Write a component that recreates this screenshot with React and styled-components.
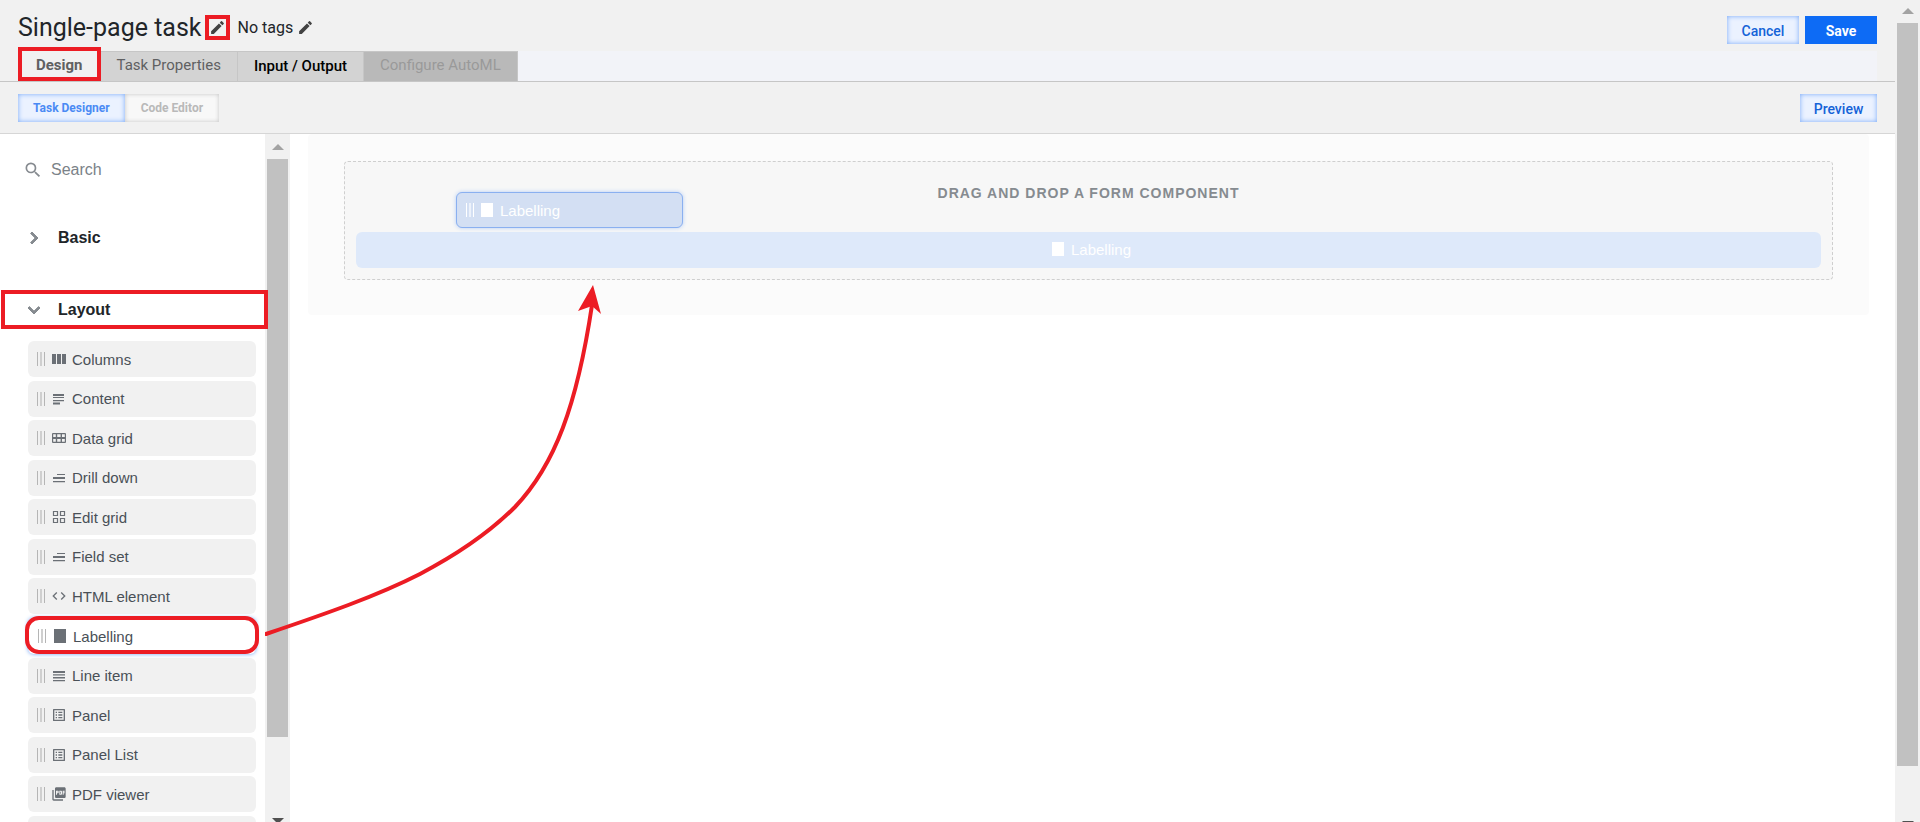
import { useState } from "react";
import styled, { createGlobalStyle, css } from "styled-components";
import {
  MdChevronRight,
  MdCode,
  MdEdit,
  MdExpandMore,
  MdOutlineListAlt,
  MdPictureAsPdf,
  MdSearch,
} from "react-icons/md";

const ColumnsIcon = () => (
  <svg viewBox="0 0 16 16" fill="currentColor">
    <path d="M1 3h4v10H1zM6 3h4v10H6zM11 3h4v10h-4z" />
  </svg>
);

const ContentIcon = () => (
  <svg viewBox="0 0 16 16" fill="currentColor">
    <path d="M2 3h11v2H2zM2 6h11v1H2zM2 9h11v1.2H2zM2 11.6h7v1.8H2z" />
  </svg>
);

const DataGridIcon = () => (
  <svg viewBox="0 0 16 16" fill="currentColor" fillRule="evenodd">
    <path d="M2 3h12a1 1 0 0 1 1 1v8a1 1 0 0 1-1 1H2a1 1 0 0 1-1-1V4a1 1 0 0 1 1-1zM2.2 4.2v2.8h2.6V4.2zM6.2 4.2v2.8h3.4V4.2zM11 4.2v2.8h2.8V4.2zM2.2 9v2.8h2.6V9zM6.2 9v2.8h3.4V9zM11 9v2.8h2.8V9z" />
  </svg>
);

const FieldSetIcon = () => (
  <svg viewBox="0 0 16 16" fill="currentColor">
    <path d="M6 4h8v1H6zM2 7h12v2H2zM2 11h12v1.2H2z" />
  </svg>
);

const EditGridIcon = () => (
  <svg viewBox="0 0 16 16" fill="none" stroke="currentColor" strokeWidth="1.2">
    <path d="M2.5 2.5h4v4h-4zM9.5 2.5h4v4h-4zM2.5 9.5h4v4h-4zM9.5 9.5h4v4h-4z" />
  </svg>
);

const LabellingIcon = () => (
  <svg viewBox="0 0 16 16" fill="currentColor">
    <path d="M2 1h12v14H2z" />
  </svg>
);

const LineItemIcon = () => (
  <svg viewBox="0 0 16 16" fill="currentColor">
    <path d="M2 3h12v2H2zM2 6.2h12v1.2H2zM2 9h12v1.4H2zM2 12h12v1.2H2z" />
  </svg>
);

const components = [
  { name: "Columns", icon: ColumnsIcon },
  { name: "Content", icon: ContentIcon },
  { name: "Data grid", icon: DataGridIcon },
  { name: "Drill down", icon: FieldSetIcon },
  { name: "Edit grid", icon: EditGridIcon },
  { name: "Field set", icon: FieldSetIcon },
  { name: "HTML element", icon: MdCode },
  { name: "Labelling", icon: LabellingIcon, active: true },
  { name: "Line item", icon: LineItemIcon },
  { name: "Panel", icon: MdOutlineListAlt },
  { name: "Panel List", icon: MdOutlineListAlt },
  { name: "PDF viewer", icon: MdPictureAsPdf },
  { name: "", icon: null },
];

const Scrollbar = ({ top, size, cut }) => (
  <Track $top={top} aria-hidden="true">
    <Arrow />
    <Thumb $size={size} />
    <ArrowDown $cut={cut} />
  </Track>
);

const App = () => {
  const [search, setSearch] = useState("");

  return (
    <Page>
      <GlobalStyle />
      <Main>
        <Header>
          <TitleRow>
            <Title>Single-page task</Title>
            <IconButton $marked aria-label="Edit title">
              <MdEdit />
            </IconButton>
            <Tags>No tags</Tags>
            <IconButton aria-label="Edit tags">
              <MdEdit />
            </IconButton>
            <Actions $bottom>
              <Button>Cancel</Button>
              <Button $primary>Save</Button>
            </Actions>
          </TitleRow>
          <Tabs role="tablist">
            <Tab role="tab" aria-selected="true" $active>
              Design
            </Tab>
            <Tab role="tab">Task Properties</Tab>
            <Tab role="tab" $strong>
              Input / Output
            </Tab>
            <Tab role="tab" disabled>
              Configure AutoML
            </Tab>
          </Tabs>
        </Header>
        <Toolbar>
          <ModeButton $active>Task Designer</ModeButton>
          <ModeButton>Code Editor</ModeButton>
          <Actions>
            <Button $wide>Preview</Button>
          </Actions>
        </Toolbar>
        <Body>
          <Sidebar>
            <SearchBox>
              <MdSearch />
              <input
                aria-label="Search"
                placeholder="Search"
                value={search}
                onChange={(e) => setSearch(e.target.value)}
              />
            </SearchBox>
            <GroupButton aria-expanded="false">
              <MdChevronRight />
              Basic
            </GroupButton>
            <GroupButton aria-expanded="true" $marked>
              <MdExpandMore />
              Layout
            </GroupButton>
            <List>
              {components.map(({ name, icon: Icon, active }) => (
                <Item key={name} $active={active}>
                  {Icon && (
                    <>
                      <Handle />
                      <Icon />
                    </>
                  )}
                  {name}
                </Item>
              ))}
            </List>
          </Sidebar>
          <Scrollbar top={8} size="85%" cut={2} />
          <Canvas>
            <Form>
              <DropZone>
                <Hint>Drag and drop a form component</Hint>
                <Placeholder>
                  <LabellingIcon />
                  Labelling
                </Placeholder>
                <Ghost>
                  <Handle $light />
                  <LabellingIcon />
                  Labelling
                </Ghost>
              </DropZone>
            </Form>
          </Canvas>
          <DragArrow viewBox="0 0 340 352" aria-hidden="true">
            <path
              d="M1 349C60 329 112 311 155 289C195 268 225 247 250 222C290 180 312 120 327 20"
              fill="none"
              stroke="#ec1c24"
              strokeWidth="4"
              strokeLinecap="round"
            />
            <path d="M328 0L336 29L327 21L313 26Z" fill="#ec1c24" />
          </DragArrow>
        </Body>
      </Main>
      <Scrollbar top={6} size="91%" cut={5} />
    </Page>
  );
};

const GlobalStyle = createGlobalStyle`
  * {
    box-sizing: border-box;
  }

  body {
    margin: 0;
    font-family: "Liberation Sans", Arial, sans-serif;
    color: #212529;
  }

  button {
    font-family: Roboto, sans-serif;
    margin: 0;
    border: 0;
    cursor: pointer;
  }
`;

const Page = styled.div`
  display: flex;
  height: 100vh;
  overflow: hidden;
  background: #fff;
`;

const Main = styled.div`
  flex: 1;
  min-width: 0;
  display: flex;
  flex-direction: column;
`;

const Header = styled.header`
  background: #f1f1f1;
  border-bottom: 1px solid #c6c6c6;
`;

const TitleRow = styled.div`
  display: flex;
  align-items: center;
  height: 51px;
  padding: 11px 18px 7px;
`;

const Title = styled.h1`
  margin: 0 3px 0 0;
  font: 400 25px/28px Roboto, sans-serif;
`;

const IconButton = styled.button`
  display: flex;
  align-items: center;
  justify-content: center;
  width: 25px;
  height: 25px;
  padding: 0;
  color: #424242;
  background: none;
  border: ${(props) => (props.$marked ? "4px solid #ec1c24" : "0")};

  svg {
    flex: none;
    font-size: 17px;
  }
`;

const Tags = styled.span`
  margin-left: 8px;
  font: 16px/20px Roboto, sans-serif;
`;

const Actions = styled.div`
  display: flex;
  align-self: ${(props) => (props.$bottom ? "flex-end" : "center")};
  gap: 6px;
  margin-left: auto;
`;

const Button = styled.button`
  width: ${(props) => (props.$wide ? 77 : 72)}px;
  height: 28px;
  padding: 2px 0 0;
  font-size: 14px;
  font-weight: 500;
  color: #1463d8;
  background: #ebf2ff;
  box-shadow: inset 0 0 5px #78a9f8;

  ${(props) =>
    props.$primary &&
    css`
      font-weight: 700;
      color: #fff;
      background: #0d6bf5;
      box-shadow: none;
    `}
`;

const Tabs = styled.div`
  display: flex;
  height: 30px;
  margin: 0 18px;
  background: #f2f3f8;
`;

const Tab = styled.button`
  padding: 0 16px 3px;
  font-size: 15px;
  color: #5f6062;
  background: #d3d3d3;
  border: solid #c6c6c6;
  border-width: 1px 1px 0 0;

  ${(props) =>
    props.$strong &&
    css`
      padding-bottom: 1px;
      font-weight: 500;
      color: #000;
    `}

  ${(props) =>
    props.$active &&
    css`
      height: 34px;
      margin-top: -4px;
      padding: 2px 14px 0;
      font-weight: 700;
      background: #f1f1f1;
      border: 4px solid #ec1c24;
    `}

  &:disabled {
    color: #999;
    background: #b9b9b9;
    cursor: default;
  }
`;

const Toolbar = styled.div`
  display: flex;
  align-items: center;
  height: 52px;
  padding: 0 18px;
  background: #f1f1f1;
  border-bottom: 1px solid #d6d6d6;
`;

const ModeButton = styled.button`
  height: 28px;
  padding: 0 16px;
  font-size: 12px;
  font-weight: 700;
  color: #b9b9b9;
  background: #f8f8f8;
  box-shadow: inset 0 0 4px #c4c4c4;

  ${(props) =>
    props.$active &&
    css`
      padding: 0 15px;
      color: #4a8af4;
      background: #ebf2ff;
      box-shadow: inset 0 0 5px #78a9f8;
    `}
`;

const Body = styled.div`
  position: relative;
  flex: 1;
  min-height: 0;
  display: flex;
`;

const Sidebar = styled.aside`
  width: 265px;
  padding-top: 18px;
`;

const SearchBox = styled.label`
  display: flex;
  align-items: center;
  gap: 8px;
  height: 36px;
  padding-left: 23px;
  color: #868b90;

  svg {
    flex: none;
    font-size: 20px;
  }

  input {
    width: 180px;
    padding: 0;
    border: 0;
    outline: 0;
    font: 16px "Liberation Sans", Arial, sans-serif;
  }

  input::placeholder {
    color: #7b8288;
    opacity: 1;
  }
`;

const GroupButton = styled.button`
  display: flex;
  align-items: center;
  gap: 12px;
  width: 267px;
  height: 39px;
  margin: 30px 0 33px 1px;
  padding: 0 0 0 21px;
  font: bold 16px "Liberation Sans", Arial, sans-serif;
  color: #212529;
  background: none;

  svg {
    font-size: 24px;
    color: #868b90;
  }

  path:not([fill="none"]) {
    stroke-width: 1px;
  }

  ${(props) =>
    props.$marked &&
    css`
      position: relative;
      z-index: 1;
      margin: 0 0 12px 1px;
      padding-left: 17px;
      border: 4px solid #ec1c24;
    `}
`;

const List = styled.ul`
  display: flex;
  flex-direction: column;
  justify-content: space-between;
  height: 511px;
  margin: 0;
  padding: 0 9px 0 28px;
  list-style: none;
`;

const Item = styled.li`
  display: flex;
  align-items: center;
  height: 36px;
  padding: 0 9px;
  font-size: 15px;
  color: #495057;
  background: #f1f1f1;
  border-radius: 6px;
  cursor: grab;

  svg {
    flex: none;
    width: 16px;
    height: 16px;
    margin: 0 5px 0 6px;
    color: #6b7076;
  }

  ${(props) =>
    props.$active &&
    css`
      position: relative;
      padding-left: 10px;
      background: #fff;
      box-shadow: 0 0 4px #6aa0f5;

      &::after {
        content: "";
        position: absolute;
        inset: -2px -3px 0;
        border: 4px solid #ec1c24;
        border-radius: 14px;
      }
    `}
`;

const Handle = styled.span`
  width: 8px;
  height: 14px;
  border: solid ${(props) => (props.$light ? "#fff" : "#b5b5b5")};
  border-width: 0 1px;
  background: linear-gradient(
      ${(props) => (props.$light ? "#edf2fb, #edf2fb" : "#cfcfcf, #cfcfcf")}
    )
    center / 2px 100% no-repeat;
`;

const Track = styled.div`
  flex: none;
  display: flex;
  flex-direction: column;
  align-items: center;
  width: 25px;
  padding-top: ${(props) => props.$top}px;
  background: #f1f1f1;
`;

const Arrow = styled.span`
  flex: none;
  margin: 2px 0 9px;
  border: solid transparent;
  border-width: 0 6px 6px;
  border-bottom-color: #a3a3a3;
`;

const Thumb = styled.span`
  flex: none;
  width: 21px;
  height: ${(props) => props.$size};
  background: #c1c1c1;
`;

const ArrowDown = styled.span`
  margin-top: auto;
  margin-bottom: -${(props) => props.$cut}px;
  border: solid transparent;
  border-width: 6px 6px 0;
  border-top-color: #505050;
`;

const Canvas = styled.main`
  flex: 1;
  min-width: 0;
  padding: 0 26px 0 18px;
`;

const Form = styled.div`
  padding: 27px 36px 35px;
  background: #fbfbfb;
  border-radius: 4px;
`;

const DropZone = styled.div`
  position: relative;
  padding: 21px 11px 11px;
  background: #f7f7f7;
  border: 1px dashed #cfcfcf;
  border-radius: 4px;
`;

const Hint = styled.p`
  margin: 0 0 29px;
  font-size: 14px;
  font-weight: 700;
  line-height: 20px;
  letter-spacing: 1px;
  text-align: center;
  text-transform: uppercase;
  color: #868b90;
`;

const Placeholder = styled.div`
  display: flex;
  align-items: center;
  justify-content: center;
  gap: 5px;
  height: 36px;
  padding: 0 0 2px 4px;
  font-size: 15px;
  color: #fff;
  background: #dee9fa;
  border-radius: 6px;

  svg {
    width: 16px;
    height: 16px;
  }
`;

const Ghost = styled.div`
  position: absolute;
  top: 30px;
  left: 111px;
  display: flex;
  align-items: center;
  width: 227px;
  height: 36px;
  padding: 0 9px;
  font-size: 15px;
  color: #fff;
  background: #d3dff3;
  border: 1px solid #8ab0f0;
  border-radius: 6px;
  box-shadow: 0 0 4px #b5cdf5;

  svg {
    width: 16px;
    height: 16px;
    margin: 0 5px;
  }
`;

const DragArrow = styled.svg`
  position: absolute;
  top: 151px;
  left: 265px;
  width: 340px;
  height: 352px;
  pointer-events: none;
`;

export default App;
